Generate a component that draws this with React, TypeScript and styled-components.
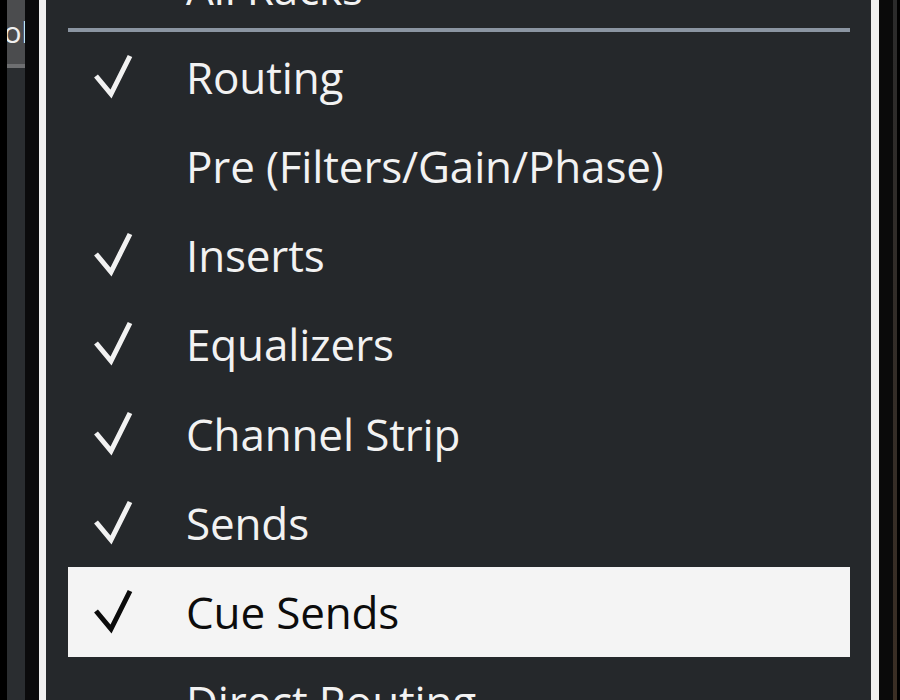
import styled, { createGlobalStyle } from 'styled-components';

const GlobalStyle = createGlobalStyle`
  html, body {
    margin: 0;
    padding: 0;
    background: #000000;
  }
  body {
    font-family: 'Open Sans', 'Noto Sans', 'Liberation Sans', sans-serif;
  }
`;

type Item = { label: string; checked?: boolean; active?: boolean; separatorAfter?: boolean };

const ITEMS: Item[] = [
  { label: 'All Racks', separatorAfter: true },
  { label: 'Routing', checked: true },
  { label: 'Pre (Filters/Gain/Phase)' },
  { label: 'Inserts', checked: true },
  { label: 'Equalizers', checked: true },
  { label: 'Channel Strip', checked: true },
  { label: 'Sends', checked: true },
  { label: 'Cue Sends', checked: true, active: true },
  { label: 'Direct Routing' },
];

function Check({ dark }: { dark: boolean }) {
  return (
    <svg width="40" height="46" viewBox="0 0 40 46">
      <polyline
        points="3,22 18,40 37,2"
        fill="none"
        stroke={dark ? '#0c0c0c' : '#f2f2f2'}
        strokeWidth="5"
        strokeLinejoin="miter"
      />
    </svg>
  );
}

export default function App() {
  return (
    <>
      <GlobalStyle />
      <Page>
        <SideStrip>
          <SideTab>ol</SideTab>
          <SideFill />
        </SideStrip>
        <DarkGap />
        <MenuFrame>
          <MenuList>
            {ITEMS.map((item) => (
              <div key={item.label}>
                <Row active={!!item.active}>
                  <CheckCell>{item.checked && <Check dark={!!item.active} />}</CheckCell>
                  <Label>{item.label}</Label>
                </Row>
                {item.separatorAfter && <Separator />}
              </div>
            ))}
          </MenuList>
        </MenuFrame>
        <RightGap />
        <RightLine />
      </Page>
    </>
  );
}

const Page = styled.div`
  display: flex;
  height: 700px;
  width: 900px;
  overflow: hidden;
  background: #000000;
  padding-left: 7px;
  box-sizing: border-box;
`;

const SideStrip = styled.div`
  width: 18px;
  display: flex;
  flex-direction: column;
  flex-shrink: 0;
`;

const SideTab = styled.div`
  height: 64px;
  background: #4b4c4e;
  border-bottom: 4px solid #6e6f71;
  color: #f0f0f0;
  font-size: 30px;
  line-height: 64px;
  overflow: hidden;
  white-space: nowrap;
  direction: rtl;
  text-indent: -4px;
`;

const SideFill = styled.div`
  flex: 1;
  background: #2a2d30;
`;

const DarkGap = styled.div`
  width: 14px;
  flex-shrink: 0;
  background: #0b0b0c;
`;

const MenuFrame = styled.div`
  width: 840px;
  flex-shrink: 0;
  box-sizing: border-box;
  background: #25282b;
  border-left: 7px solid #f0f0f0;
  border-right: 8px solid #f0f0f0;
  padding: 0 21px 0 22px;
  overflow: hidden;
`;

const MenuList = styled.div`
  margin-top: -57px;
  display: flex;
  flex-direction: column;
`;

const Row = styled.div<{ active: boolean }>`
  height: 89.2px;
  display: grid;
  grid-template-columns: 118px 1fr;
  align-items: center;
  background: ${(p) => (p.active ? '#f4f4f4' : 'transparent')};
  color: ${(p) => (p.active ? '#0c0c0c' : '#f2f2f2')};
`;

const CheckCell = styled.div`
  display: flex;
  align-items: center;
  padding-left: 25px;
  height: 46px;
`;

const Label = styled.span`
  font-size: 44px;
  line-height: 1;
  letter-spacing: -0.15px;
  white-space: nowrap;
`;

const Separator = styled.div`
  height: 4px;
  margin-top: -4px;
  background: #8b95a2;
  position: relative;
`;

const RightGap = styled.div`
  width: 14px;
  flex-shrink: 0;
  background: #0a0a0a;
`;

const RightLine = styled.div`
  width: 4px;
  flex-shrink: 0;
  background: linear-gradient(#2b2b2b, #3a2e24);
`;
